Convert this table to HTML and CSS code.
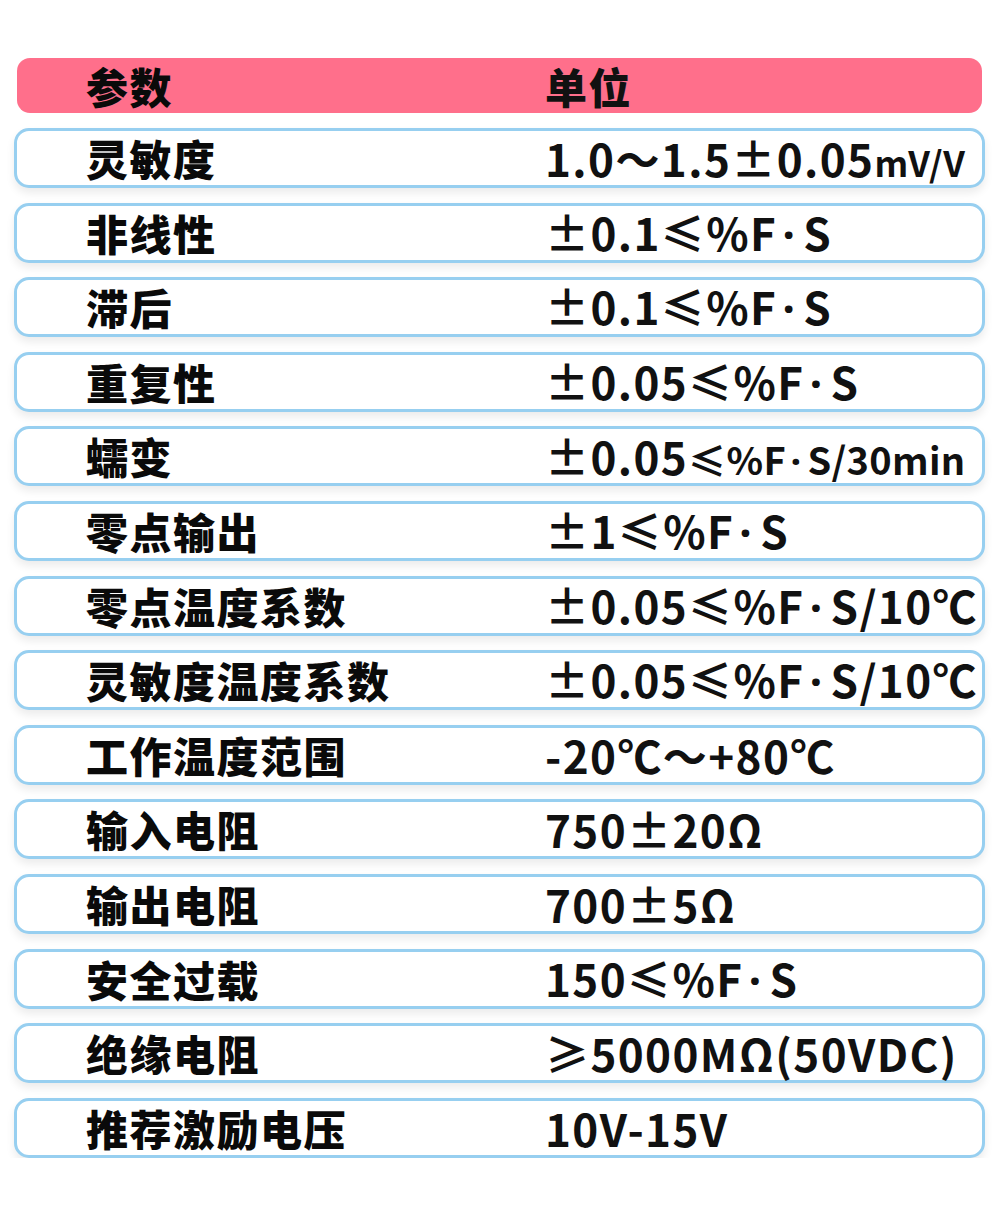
FILE: index.html
```html
<!DOCTYPE html>
<html lang="zh-CN">
<head>
<meta charset="utf-8">
<title>参数</title>
<link rel="stylesheet" href="styles.css">
</head>
<body>
<div class="table">
  <div class="head">
    <div class="cell name">参数</div>
    <div class="cell val">单位</div>
  </div>
  <div class="rows">
    <div class="row"><div class="cell name">灵敏度</div><div class="cell val">1.0～1.5±0.05<span class="small">mV/V</span></div></div>
    <div class="row"><div class="cell name">非线性</div><div class="cell val">±0.1≤%F<span class="dot">·</span>S</div></div>
    <div class="row"><div class="cell name">滞后</div><div class="cell val">±0.1≤%F<span class="dot">·</span>S</div></div>
    <div class="row"><div class="cell name">重复性</div><div class="cell val">±0.05≤%F<span class="dot">·</span>S</div></div>
    <div class="row"><div class="cell name">蠕变</div><div class="cell val">±0.05<span class="mid">≤%F<span class="dot">·</span>S/30min</span></div></div>
    <div class="row"><div class="cell name">零点输出</div><div class="cell val">±1≤%F<span class="dot">·</span>S</div></div>
    <div class="row"><div class="cell name">零点温度系数</div><div class="cell val">±0.05≤%F<span class="dot">·</span>S/10℃</div></div>
    <div class="row"><div class="cell name">灵敏度温度系数</div><div class="cell val">±0.05≤%F<span class="dot">·</span>S/10℃</div></div>
    <div class="row"><div class="cell name">工作温度范围</div><div class="cell val">-20℃～+80℃</div></div>
    <div class="row"><div class="cell name">输入电阻</div><div class="cell val">750±20Ω</div></div>
    <div class="row"><div class="cell name">输出电阻</div><div class="cell val">700±5Ω</div></div>
    <div class="row"><div class="cell name">安全过载</div><div class="cell val">150≤%F<span class="dot">·</span>S</div></div>
    <div class="row"><div class="cell name">绝缘电阻</div><div class="cell val">≥5000MΩ(50VDC)</div></div>
    <div class="row"><div class="cell name">推荐激励电压</div><div class="cell val">10V-15V</div></div>
  </div>
</div>
</body>
</html>
```
FILE: styles.css
```css
html, body {
  margin: 0;
  padding: 0;
  background: #ffffff;
}
body {
  font-family: "Noto Sans CJK SC", "Noto Sans", sans-serif;
  color: #111111;
}
.table {
  padding: 58px 15px 0 14px;
  width: 971px;
}
.head {
  display: grid;
  grid-template-columns: 459px 1fr;
  align-items: center;
  height: 55px;
  margin: 0 3px 0 3px;
  padding-left: 69px;
  background: #ff6f8b;
  border-radius: 13px;
}
.rows {
  display: flex;
  flex-direction: column;
  gap: 14.6px;
  margin-top: 15px;
}
.row {
  display: grid;
  grid-template-columns: 459px 1fr;
  align-items: center;
  height: 54px;
  padding-left: 69px;
  border: 3px solid #97cff0;
  border-radius: 15px;
  background: #ffffff;
  box-shadow: 0 5px 9px rgba(0, 0, 0, 0.08);
}
.cell {
  white-space: nowrap;
  line-height: 1;
}
.name {
  font-size: 42px;
  font-weight: 900;
  letter-spacing: 1.5px;
  color: #0a0a0a;
}
.val {
  font-size: 44px;
  font-weight: 700;
  letter-spacing: 1.4px;
}
.head .val {
  font-size: 42px;
  font-weight: 900;
  letter-spacing: 1.5px;
}
.small {
  font-size: 35px;
  letter-spacing: 0.5px;
}
.mid {
  font-size: 38px;
  letter-spacing: 0.3px;
}
.dot {
  font-family: "Noto Sans", "DejaVu Sans", sans-serif;
  font-weight: 700;
  margin: 0 0.16em 0 0.12em;
}
```
